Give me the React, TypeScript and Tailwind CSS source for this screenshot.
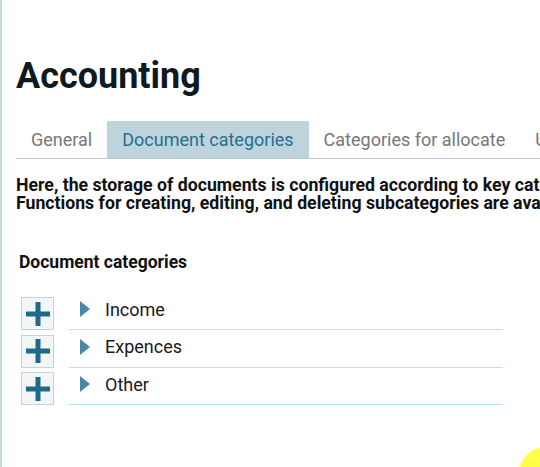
import { useState } from 'react'

const tabs = ['General', 'Document categories', 'Categories for allocate', 'Users']
const categories = ['Income', 'Expences', 'Other']

function PlusIcon() {
  return (
    <svg width="24" height="24" viewBox="0 0 24 24">
      <rect x="9.5" y="0" width="5" height="24" fill="#1d6a89" />
      <rect x="0" y="9.5" width="24" height="5" fill="#1d6a89" />
    </svg>
  )
}

export default function App() {
  const [active, setActive] = useState(1)

  return (
    <div className="relative h-[467px] w-[540px] overflow-hidden bg-white font-['Roboto',sans-serif] text-[#111]">
      <div className="h-full border-l-2 border-[#c9d9e1] pl-[14px] pt-[51px]">
        {/* Title */}
        <h1 className="text-[36px] font-bold leading-[50px] text-[#0f1a20]">Accounting</h1>

        {/* Tabs */}
        <div className="mt-[20px] flex w-[700px] border-b border-[#b9ccd6]">
          {tabs.map((t, i) => (
            <button
              key={t}
              onClick={() => setActive(i)}
              className={`h-[37px] whitespace-nowrap px-[15px] text-[18px] ${
                active === i ? 'bg-[#bfd3dc] text-[#25708f]' : 'text-[#777]'
              }`}
            >
              {t}
            </button>
          ))}
        </div>

        {/* Description */}
        <div className="mt-[17px] whitespace-nowrap text-[17.7px] font-bold leading-[18px] text-[#111]">
          <p>Here, the storage of documents is configured according to key categories and subcategories.</p>
          <p>Functions for creating, editing, and deleting subcategories are available for each category.</p>
        </div>

        {/* Category list */}
        <h2 className="ml-[3px] mt-[38px] text-[17.5px] font-bold leading-[24px] text-[#111]">Document categories</h2>

        <div className="ml-[5px] mt-[23px] flex flex-col gap-[4.5px]">
          {categories.map(c => (
            <div key={c} className="flex">
              <button className="flex h-[33px] w-[33px] items-center justify-center border border-[#c3d4db] bg-[#f3f6f7]">
                <PlusIcon />
              </button>
              <div className="ml-[15px] flex h-[33px] w-[434px] items-center border-b border-[#b3e5f5] pb-[8px]">
                <svg width="10" height="16" viewBox="0 0 10 16" className="ml-[11px]">
                  <polygon points="0,0 10,8 0,16" fill="#4a87a6" />
                </svg>
                <span className="ml-[15px] text-[18px] text-[#1a1a1a]">{c}</span>
              </div>
            </div>
          ))}
        </div>
      </div>

      {/* cursor highlight */}
      <div className="absolute left-[519px] top-[447px] h-[54px] w-[54px] rounded-full bg-[#ffff45]" />
    </div>
  )
}
